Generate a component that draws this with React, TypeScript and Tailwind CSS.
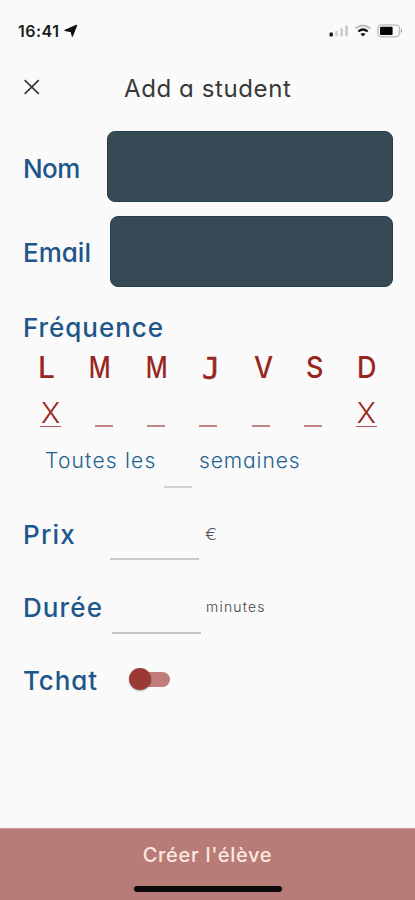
import type { ReactNode } from 'react';

const days = [
  { letter: 'L', box: 'w-[15px]', glyph: 'inline-block' },
  { letter: 'M', box: 'w-[21px]', glyph: 'inline-block scale-x-[0.8]' },
  { letter: 'M', box: 'w-[21px]', glyph: 'inline-block scale-x-[0.8]' },
  { letter: 'J', box: 'w-[17px]', glyph: "inline-block font-['DejaVu_Sans_Mono',monospace] font-normal leading-[38px] [-webkit-text-stroke:0.5px_#982620]" },
  { letter: 'V', box: 'w-[17px]', glyph: 'inline-block scale-x-90' },
  { letter: 'S', box: 'w-[15px]', glyph: 'inline-block scale-x-90' },
  { letter: 'D', box: 'w-[18px]', glyph: 'inline-block scale-x-90' },
];

const selected = [true, false, false, false, false, false, true];

function Label({ children, className }: { children: ReactNode; className: string }) {
  return (
    <span className={`shrink-0 whitespace-nowrap text-[26px] font-medium leading-8 text-[#205689] ${className}`}>{children}</span>
  );
}

function StatusBar() {
  return (
    <div className="flex h-[62px] items-center pl-[18px] pr-[11px]">
      <span className="w-[43px] whitespace-nowrap text-[16px] font-semibold tracking-[0.500px] text-[#1c1c1c]">16:41</span>
      <svg className="ml-[3px] h-[14px] w-[14px]" viewBox="0 0 14 14">
        <path d="M12.600 1.400 8.300 12.200 7.200 7.600 1 6.400Z" fill="#111" stroke="#111" strokeWidth="1.200" strokeLinejoin="round" />
      </svg>
      <svg className="ml-auto h-[14px] w-[75px]" viewBox="0 0 75 14">
        <rect x="0.5" y="8.6" width="3.4" height="4" rx="1" fill="#151515" />
        <rect x="6.2" y="6.8" width="2.8" height="5.8" rx="0.8" fill="#d2d2d2" />
        <rect x="11.2" y="4.2" width="2.8" height="8.4" rx="0.8" fill="#cdcdcd" />
        <rect x="16.2" y="1.4" width="2.8" height="11.2" rx="0.8" fill="#cdcdcd" />
        <path d="M26.500 4.600Q34 -1.600 41.500 4.600" fill="none" stroke="#bdbdbd" strokeWidth="2" />
        <path d="M29.300 7.500Q34 3.500 38.700 7.500" fill="none" stroke="#151515" strokeWidth="2.200" />
        <path d="M31.500 10Q34 8 36.500 10L34 12.600Z" fill="#151515" />
        <rect x="49" y="1" width="21.500" height="11.800" rx="3.600" fill="none" stroke="#c2c2c2" strokeWidth="1.600" />
        <rect x="51" y="2.800" width="12.600" height="8.200" rx="1" fill="#050505" />
        <path d="M72 4.800Q74.400 6.900 72 9Z" fill="#999" />
      </svg>
    </div>
  );
}

export default function App() {
  return (
    <div className="flex h-[900px] w-[415px] flex-col overflow-hidden bg-[#fafafa] font-['Inter',sans-serif] [font-feature-settings:'cv11']">
      <StatusBar />
      <header className="flex h-[53px] items-center">
        <svg className="mb-[3px] ml-6 h-4 w-4" viewBox="0 0 16 16">
          <path d="M.7 1.200 14.800 14.800M14.800 1.200.7 14.800" stroke="#333940" strokeWidth="1.700" fill="none" />
        </svg>
        <h1 className="ml-[84px] whitespace-nowrap text-[24px] font-normal leading-8 tracking-[0.600px] text-[#383838]">Add a student</h1>
      </header>

      <div className="mt-4 flex h-[71px] items-center pl-[23px] pr-[22px]">
        <Label className="mt-[5px] w-[84px] tracking-[-0.600px]">Nom</Label>
        <div className="h-[71px] flex-1 rounded-[8px] border border-[#243f50] bg-[#374955]" />
      </div>
      <div className="mt-[14px] flex h-[71px] items-center pl-[23px] pr-[22px]">
        <Label className="mt-[2px] w-[87px]">Email</Label>
        <div className="h-[71px] flex-1 rounded-[8px] border border-[#243f50] bg-[#374955]" />
      </div>

      <div className="mt-[25px] flex h-8 items-center pl-[23px]">
        <Label className="tracking-[0.950px]">Fréquence</Label>
      </div>
      <div className="mt-[6px] flex h-[34px] items-center justify-between pl-[39px] pr-[39px] text-[30px] font-medium leading-[34px] text-[#982620]">
        {days.map((d, i) => (
          <span key={i} className={`flex h-[34px] justify-center ${d.box}`}>
            <span className={d.glyph}>{d.letter}</span>
          </span>
        ))}
      </div>
      <div className="mt-[17px] flex h-[26px] items-end justify-between pl-10 pr-[38px] text-[29px] font-light text-[#982620]">
        {selected.map((on, i) =>
          on ? (
            <span key={i} className="flex h-[26px] w-[21px] items-center justify-center border-b border-[#ae5a56] pb-px">X</span>
          ) : (
            <span key={i} className="h-[2px] w-[18px] bg-[#c08582]" />
          ),
        )}
      </div>

      <div className="mt-[18px] flex h-[43px] pl-[45px] text-[21px] font-light text-[#22608f]">
        <span className="w-[119px] whitespace-nowrap leading-8 tracking-[1.200px]">Toutes les</span>
        <span className="h-[43px] w-[28px] border-b-2 border-[#d2d2d2]" />
        <span className="ml-[7px] whitespace-nowrap leading-8 tracking-[0.900px]">semaines</span>
      </div>

      <div className="mt-[31px] flex h-[41px] pl-[23px]">
        <Label className="w-[87px] tracking-[1.200px]">Prix</Label>
        <span className="h-[41px] w-[89px] border-b-2 border-[#cbcbcb]" />
        <span className="ml-[6px] inline-block origin-left scale-x-110 text-[16.500px] font-light leading-[30px] text-[#555]">€</span>
      </div>
      <div className="mt-[32px] flex h-[42px] pl-[23px]">
        <Label className="w-[89px] tracking-[1.100px]">Durée</Label>
        <span className="h-[42px] w-[89px] border-b-2 border-[#c1c4c2]" />
        <span className="ml-[5px] text-[14px] font-light leading-[30px] tracking-[1.200px] text-[#444]">minutes</span>
      </div>
      <div className="mt-[31px] flex h-8 items-center pl-[23px]">
        <Label className="w-[106px] tracking-[0.900px]">Tchat</Label>
        <div className="mb-[4px] flex h-[22px] w-[41px] items-center">
          <span className="z-10 h-[22px] w-[22px] shrink-0 rounded-full bg-[#9b3a35] shadow-[0_1px_2px_rgba(0,0,0,0.3)]" />
          <span className="-ml-2 h-[15px] flex-1 rounded-r-full bg-[#c07d7a]" />
        </div>
      </div>

      <footer className="mt-auto flex h-[72px] flex-col items-center border-t border-[#cf9d99] bg-[#b87c78]">
        <span className="mt-[10px] whitespace-nowrap text-[20px] font-medium leading-8 tracking-[0.700px] text-[#fde8e0]">Créer l'élève</span>
        <span className="mt-[15px] h-[6px] w-[148px] rounded-full bg-[#0c0a0a]" />
      </footer>
    </div>
  );
}
